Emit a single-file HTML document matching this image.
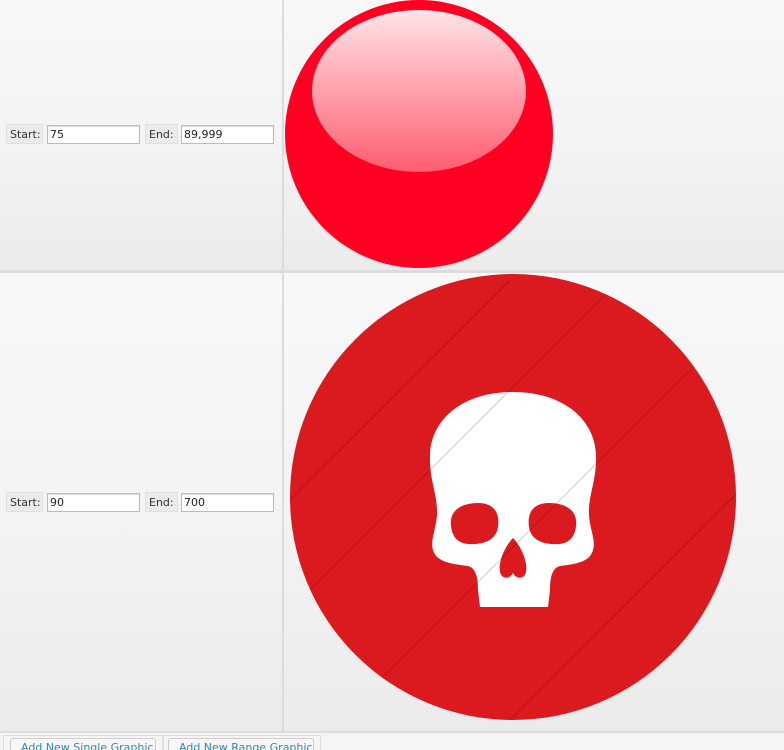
<!DOCTYPE html>
<html><head><style>
html,body{margin:0;width:784px;height:750px;overflow:hidden}
body{font-family:"DejaVu Sans","Liberation Sans",sans-serif;background:#f5f5f5;position:relative}
.cell{position:absolute;background:linear-gradient(#f8f8f8,#f3f3f3 55%,#ebebeb)}
.vl{position:absolute;background:#dcdcdc}
.lab{position:absolute;height:20px;border:1px solid #e0e0e0;background:#ebebeb;font-size:11px;line-height:20px;color:#333;padding:0 3px;box-sizing:border-box}
.inp{position:absolute;height:19px;border:1px solid #bbb;background:#fff;font-size:11px;line-height:17px;color:#222;padding:0 2px;box-sizing:border-box;box-shadow:inset 0 1px 1px #ddd}
.btn{position:absolute;top:738px;height:20px;border:1px solid #ccc;border-radius:3px;background:#f7f7f7;font-size:11px;color:#2a8ab0;padding:2px 10px;box-sizing:border-box;white-space:nowrap;overflow:hidden}
</style></head><body>
<div class="cell" style="left:0;top:0;width:282px;height:270px"></div>
<div class="cell" style="left:284px;top:0;width:500px;height:270px"></div>
<div class="cell" style="left:0;top:273px;width:282px;height:458px"></div>
<div class="cell" style="left:284px;top:273px;width:500px;height:458px"></div>
<div class="vl" style="left:282px;top:0;width:2px;height:731px"></div>
<div class="vl" style="left:0;top:270px;width:784px;height:3px"></div>
<div class="vl" style="left:0;top:731px;width:784px;height:2px"></div>

<div class="lab" style="left:6px;top:124px;width:37px">Start:</div>
<div class="inp" style="left:47px;top:125px;width:93px">75</div>
<div class="lab" style="left:145px;top:124px;width:33px">End:</div>
<div class="inp" style="left:181px;top:125px;width:93px">89,999</div>

<div class="lab" style="left:6px;top:492px;width:37px">Start:</div>
<div class="inp" style="left:47px;top:493px;width:93px">90</div>
<div class="lab" style="left:145px;top:492px;width:33px">End:</div>
<div class="inp" style="left:181px;top:493px;width:93px">700</div>

<div style="position:absolute;left:3px;top:735px;width:158px;height:20px;border:1px solid #ddd"></div>
<div style="position:absolute;left:163px;top:735px;width:156px;height:20px;border:1px solid #ddd"></div>
<div class="btn" style="left:10px;width:146px">Add New Single Graphic</div>
<div class="btn" style="left:168px;width:146px">Add New Range Graphic</div>

<svg style="position:absolute;left:0;top:0" width="784" height="750">
<defs>
<linearGradient id="hl" x1="0" y1="0" x2="0" y2="1">
<stop offset="0" stop-color="#ffe4e8"/><stop offset="1" stop-color="#ff5d70"/>
</linearGradient>
<clipPath id="cc"><circle cx="513" cy="497" r="223"/></clipPath>
</defs>
<circle cx="419" cy="134" r="134" fill="#ff0022"/>
<ellipse cx="419" cy="91" rx="107" ry="81" fill="url(#hl)"/>
<circle cx="513" cy="497" r="223" fill="#da1a1e"/>
<path fill="#fff" fill-rule="evenodd" d="M513 392 C462 392 431 420 430 455 C429 480 438 495 437 515 C436 530 430 540 433 550 C436 562 452 564 468 566 C476 568 478 578 478 590 L480 607 L548 607 L550 590 C550 578 552 568 560 566 C576 564 590 562 593 550 C596 540 590 530 589 515 C588 495 597 480 596 455 C595 420 564 392 513 392 Z
M451 526 C449 510 462 503 478 503 C494 503 500 513 498 527 C496 541 482 545 468 544 C457 543 452 536 451 526 Z
M576 526 C578 510 565 503 549 503 C533 503 527 513 529 527 C531 541 545 545 559 544 C570 543 575 536 576 526 Z
M513 538 C505 546 498 562 500 572 C502 580 510 579 513 573 C516 579 524 580 526 572 C528 562 521 546 513 538 Z"/>
<g clip-path="url(#cc)" stroke="rgba(0,0,0,0.22)" stroke-width="0.8">
<line x1="290" y1="500" x2="510" y2="280"/>
<line x1="290" y1="610" x2="610" y2="290"/>
<line x1="340" y1="720" x2="700" y2="360"/>
<line x1="510" y1="720" x2="740" y2="490"/>
</g>
</svg>
</body></html>
